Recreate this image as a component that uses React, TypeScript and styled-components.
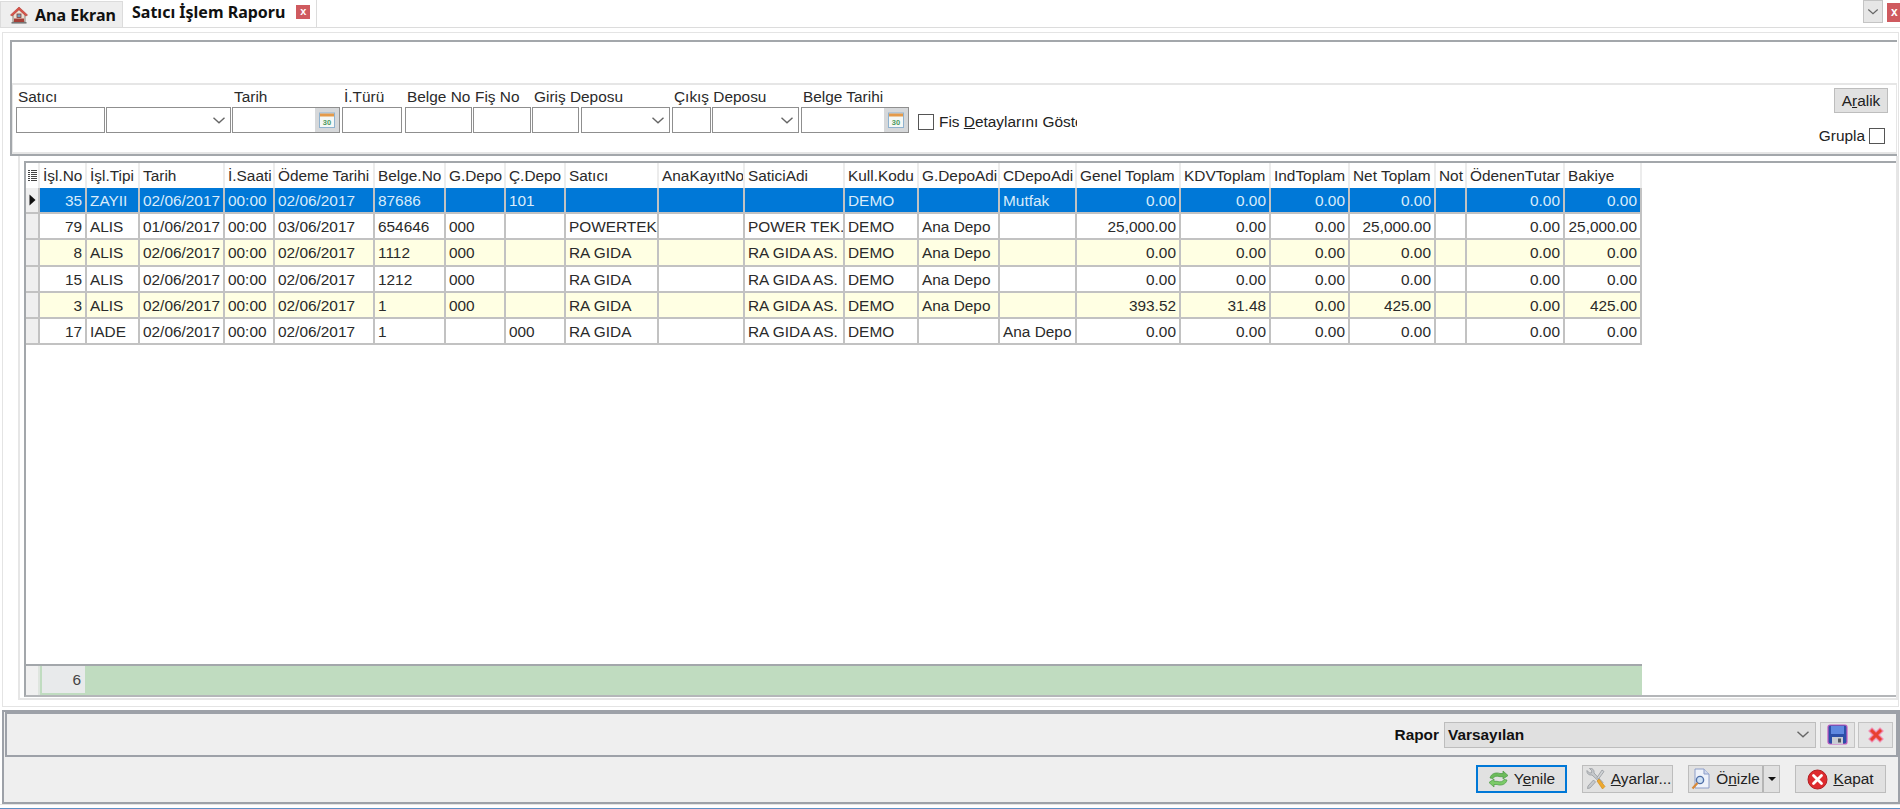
import React from 'react';
import styled, { createGlobalStyle } from 'styled-components';

const GlobalStyle = createGlobalStyle`
  html, body { margin: 0; padding: 0; background: #fff; }
  body { font-family: 'Liberation Sans', Arial, sans-serif; font-size: 15.4px; color: #222; }
  * { box-sizing: border-box; }
`;

const Page = styled.div`
  width: 1900px;
  height: 809px;
  display: flex;
  flex-direction: column;
  overflow: hidden;
`;

const TabBar = styled.div`
  height: 28px;
  flex-shrink: 0;
  display: flex;
  align-items: flex-end;
  border-bottom: 1px solid #dcdcdc;
`;

const Tab = styled.div<{ $active?: boolean }>`
  height: ${p => (p.$active ? 28 : 26)}px;
  width: ${p => (p.$active ? 194 : 123)}px;
  display: flex;
  align-items: center;
  gap: ${p => (p.$active ? 11 : 7)}px;
  padding-left: 9px;
  padding-bottom: ${p => (p.$active ? 3 : 0)}px;
  background: ${p => (p.$active ? '#fff' : '#eeeeee')};
  border: 1px solid #dcdcdc;
  border-top: ${p => (p.$active ? 'none' : '1px solid #dcdcdc')};
  border-bottom: none;
  border-left: ${p => (p.$active ? 'none' : '1px solid #dcdcdc')};
  font-family: 'Noto Sans', sans-serif;
  font-weight: 700;
  font-size: 16px;
  color: #111;
  white-space: nowrap;
`;

const TabClose = styled.span`
  width: 14px;
  height: 14px;
  background: #cf5a5f;
  color: #fff;
  font-size: 11px;
  line-height: 13px;
  font-weight: 700;
  text-align: center;
  font-family: 'Liberation Sans', sans-serif;
`;

const TabTools = styled.div`
  margin-left: auto;
  display: flex;
  align-items: flex-start;
  align-self: flex-start;
  gap: 4px;
`;

const ListButton = styled.div`
  width: 20px;
  height: 23px;
  background: #e6e6e6;
  border: 1px solid #c4c4c4;
  display: flex;
  align-items: center;
  justify-content: center;
`;

const WindowClose = styled.div`
  width: 13px;
  height: 19px;
  margin-top: 3px;
  background: #cf5a5f;
  color: #fff;
  font-size: 12px;
  font-weight: 700;
  line-height: 18px;
  padding-left: 4px;
  overflow: hidden;
`;

const Main = styled.div`
  flex: 1;
  min-height: 0;
  margin: 4px 1px 3px 2px;
  padding: 7px 0 6px 7px;
  display: flex;
  flex-direction: column;
  border: 1px solid #e4e4e4;
`;

const FilterBox = styled.div`
  height: 116px;
  flex-shrink: 0;
  margin-right: 1px;
  display: flex;
  flex-direction: column;
  border-top: 2px solid #a3a7ab;
  border-left: 2px solid #a3a7ab;
  border-bottom: 2px solid #a3a7ab;
`;

const BlankBand = styled.div`
  height: 41px;
  flex-shrink: 0;
`;

const FilterPanel = styled.div`
  flex: 1;
  display: flex;
  align-items: flex-start;
  padding: 3px 8px 0 3px;
  border: 1px solid #e6e6e6;
  border-width: 2px 1px 2px 1px;
`;

const Field = styled.div<{ $w: number; $pad: number }>`
  width: ${p => p.$w}px;
  padding-right: ${p => p.$pad}px;
  flex-shrink: 0;
`;

const FieldLabel = styled.div`
  height: 19px;
  line-height: 17px;
  padding-left: 2px;
  white-space: nowrap;
  color: #2a2a2a;
`;

const TextBox = styled.div`
  height: 26px;
  background: #fff;
  border: 1px solid #8f8f8f;
  display: flex;
  align-items: center;
  justify-content: flex-end;
`;

const CalendarButton = styled.div`
  width: 24px;
  height: 24px;
  background: #d6d8da;
  display: flex;
  align-items: center;
  justify-content: center;
`;

const CheckBox = styled.span`
  width: 16px;
  height: 16px;
  flex-shrink: 0;
  background: #fff;
  border: 1px solid #555;
`;

const DetailCheck = styled.div`
  margin: 25px 0 0 0;
  width: 159px;
  display: flex;
  align-items: center;
  gap: 5px;
  overflow: hidden;
  white-space: nowrap;
`;

const RightColumn = styled.div`
  margin-left: auto;
  display: flex;
  flex-direction: column;
  align-items: flex-end;
  gap: 14px;
`;

const SmallButton = styled.div`
  width: 54px;
  height: 25px;
  background: #e1e1e1;
  border: 1px solid #bdbdbd;
  text-align: center;
  line-height: 23px;
  color: #222;
`;

const GroupCheck = styled.div`
  display: flex;
  align-items: center;
  gap: 4px;
  padding-right: 3px;
`;

const GridSection = styled.div`
  flex: 1;
  min-height: 0;
  margin-left: 8px;
  padding: 5px 0 1px 4px;
  border-left: 2px solid #e6e6e6;
  border-bottom: 2px solid #e6e6e6;
  border-right: 2px solid #e6e6e6;
  display: flex;
`;

const Grid = styled.div`
  flex: 1;
  min-width: 0;
  display: flex;
  flex-direction: column;
  border-top: 2px solid #a3a7ab;
  border-left: 2px solid #a3a7ab;
  border-bottom: 2px solid #b4b6b9;
`;

const Row = styled.div<{ $tone?: 'head' | 'sel' | 'alt' | 'plain' }>`
  display: flex;
  flex-shrink: 0;
  width: 1616px;
  height: ${p => (p.$tone === 'head' ? 25 : 26.2)}px;
  background: ${p =>
    p.$tone === 'sel' ? '#0078d7' : p.$tone === 'alt' ? '#ffffe3' : '#fff'};
  color: ${p => (p.$tone === 'sel' ? '#d9ecfb' : '#2a2a2a')};
`;

const Cell = styled.div<{ $w: number; $right?: boolean; $head?: boolean }>`
  width: ${p => p.$w}px;
  flex-shrink: 0;
  padding: ${p => (p.$right && !p.$head ? '0 3px 0 0' : '0 0 0 3px')};
  line-height: 25px;
  text-align: ${p => (p.$right && !p.$head ? 'right' : 'left')};
  white-space: nowrap;
  overflow: hidden;
  border-right: ${p => (p.$head ? '2px solid #ececec' : '2px solid #c2c2c2')};
  border-bottom: ${p => (p.$head ? 'none' : '2px solid #c2c2c2')};
`;

const Indicator = styled.div<{ $head?: boolean }>`
  width: 14px;
  flex-shrink: 0;
  background: ${p => (p.$head ? '#fff' : '#efefef')};
  border-bottom: ${p => (p.$head ? 'none' : '2px solid #c2c2c2')};
  border-right: ${p => (p.$head ? '2px solid #ececec' : '2px solid #c2c2c2')};
  display: flex;
  align-items: center;
  justify-content: center;
`;

const GridBody = styled.div`
  flex: 1;
  min-height: 0;
  display: flex;
  flex-direction: column;
`;

const GridFooter = styled.div`
  width: 1616px;
  height: 31px;
  flex-shrink: 0;
  display: flex;
  background: #c0dcc0;
  border-top: 2px solid #a3a7ab;
`;

const FooterLead = styled.div`
  width: 14px;
  flex-shrink: 0;
  background: #f0f0f0;
  border-right: 2px solid #dfe5df;
`;

const FooterCount = styled.div`
  width: 43px;
  margin: 0 0 2px 2px;
  flex-shrink: 0;
  background: #e8eaeb;
  text-align: right;
  padding-right: 4px;
  line-height: 27px;
  color: #444;
`;

const BottomPanel = styled.div`
  height: 94px;
  flex-shrink: 0;
  margin-left: 2px;
  display: flex;
  flex-direction: column;
  background: #efefef;
  border: 2px solid #9da1a8;
`;

const ReportBar = styled.div`
  height: 45px;
  margin-left: 1px;
  flex-shrink: 0;
  display: flex;
  align-items: center;
  justify-content: flex-end;
  gap: 3px;
  padding-right: 3px;
  border: 2px solid #9da1a8;
`;

const ReportLabel = styled.span`
  font-weight: 700;
  margin-right: 2px;
  color: #111;
`;

const ReportCombo = styled.div`
  width: 372px;
  height: 26px;
  margin-right: 1px;
  background: #e0e0e0;
  border: 1px solid #bdbdbd;
  display: flex;
  align-items: center;
  justify-content: space-between;
  padding: 0 5px 0 3px;
  font-weight: 700;
  color: #111;
`;

const IconButton = styled.div`
  width: 35px;
  height: 26px;
  background: #e4e4e4;
  border: 1px solid #c4c4c4;
  display: flex;
  align-items: center;
  justify-content: center;
`;

const ActionBar = styled.div`
  flex: 1;
  display: flex;
  align-items: flex-start;
  justify-content: flex-end;
  gap: 15px;
  padding: 8px 12px 0 0;
`;

const ActionButton = styled.div<{ $focused?: boolean }>`
  width: 91px;
  height: 28px;
  background: #e1e1e1;
  border: ${p => (p.$focused ? '2px solid #0078d7' : '1px solid #bdbdbd')};
  display: flex;
  align-items: center;
  justify-content: center;
  gap: 5px;
  color: #222;
  white-space: nowrap;
`;

const SplitButton = styled.div`
  width: 92px;
  height: 28px;
  background: #e1e1e1;
  border: 1px solid #bdbdbd;
  display: flex;
  color: #222;
`;

const SplitMain = styled.div`
  flex: 1;
  display: flex;
  align-items: center;
  justify-content: center;
  gap: 5px;
  border-right: 2px solid #b5b5b5;
`;

const SplitArrow = styled.div`
  width: 15px;
  display: flex;
  align-items: center;
  justify-content: center;
`;

const Caret = styled.span`
  border-left: 4px solid transparent;
  border-right: 4px solid transparent;
  border-top: 4px solid #111;
`;

const BottomGap = styled.div`
  height: 4px;
  flex-shrink: 0;
  border-top: 1px solid #e4e4e4;
`;

const StatusLine = styled.div`
  height: 1px;
  flex-shrink: 0;
  background: #5f8fc4;
`;

const Chevron = ({ size = 14, color = '#666' }: { size?: number; color?: string }) => (
  <svg width={size} height={size * 0.6} viewBox="0 0 14 8" fill="none">
    <path d="M1.5 1.5 7 6.5l5.5-5" stroke={color} strokeWidth="1.4" />
  </svg>
);

const HomeIcon = () => (
  <svg width="18" height="20" viewBox="1 0 18 20">
    <path d="M4 9v8h12V9L10 4z" fill="#e9e1d6" stroke="#8d7f74" strokeWidth="1" />
    <path d="M1.5 10 10 2l8.500 8-1.600 1L10 4.800 3.100 11z" fill="#d9534a" stroke="#b03a33" strokeWidth=".6" />
    <rect x="8" y="9" width="4" height="3.500" fill="#6f9fbe" stroke="#8a3a30" strokeWidth=".8" />
    <rect x="5" y="13.500" width="10" height="3.500" fill="#a63f37" />
    <rect x="2.500" y="17" width="15" height="1.600" fill="#777" />
  </svg>
);

const CalendarIcon = () => (
  <svg width="18" height="18" viewBox="0 0 18 18">
    <rect x="1.500" y="2" width="15" height="14.500" fill="#f5f8f6" stroke="#8fb2cf" />
    <rect x="2" y="2.500" width="14" height="3" fill="#e49a4a" />
    <text x="9" y="13.500" fontSize="7.500" fontWeight="700" fill="#4c9a5e" textAnchor="middle" fontFamily="'Liberation Sans', sans-serif">30</text>
  </svg>
);

const RowMarker = () => (
  <svg width="7" height="12" viewBox="0 0 7 12">
    <path d="M0.500 0.500 6.500 6 0.500 11.500z" fill="#111" />
  </svg>
);

const HeaderMark = () => (
  <svg width="9" height="11" viewBox="0 0 9 11" fill="#444">
    <rect x="0" y="0" width="2" height="1" /><rect x="3" y="0" width="6" height="1" />
    <rect x="0" y="2" width="2" height="1" /><rect x="3" y="2" width="6" height="1" />
    <rect x="0" y="4" width="2" height="1" /><rect x="3" y="4" width="6" height="1" />
    <rect x="0" y="6" width="2" height="1" /><rect x="3" y="6" width="6" height="1" />
    <rect x="0" y="8" width="2" height="1" /><rect x="3" y="8" width="6" height="1" />
    <rect x="0" y="10" width="2" height="1" /><rect x="3" y="10" width="6" height="1" />
  </svg>
);

const SaveIcon = () => (
  <svg width="21" height="21" viewBox="0 0 21 21">
    <rect x="1" y="1" width="19" height="19" rx="2" fill="#2c4fa8" stroke="#c45ac0" strokeWidth="1.200" />
    <rect x="4" y="2" width="13" height="8" fill="#5f88e0" />
    <rect x="5" y="13" width="11" height="7" fill="#c9ccd4" />
    <rect x="11" y="14.500" width="3" height="4" fill="#55585f" />
  </svg>
);

const CrossIcon = () => (
  <svg width="18" height="18" viewBox="0 0 18 18">
    <path d="M2 5 5 2l4 4 4-4 3 3-4 4 4 4-3 3-4-4-4 4-3-3 4-4z" fill="#e8402f" stroke="#f08ab0" strokeWidth="1.200" />
  </svg>
);

const RefreshIcon = () => (
  <svg width="21" height="18" viewBox="0 0 21 18" fill="none">
    <path d="M2 8C3 3.500 8 2 12 3.500h3V1l5 4.500L15 9V6.700h-3C9 5.700 6 6 5 8.500z" fill="#6cbb5a" stroke="#4b9a45" strokeWidth=".7" />
    <path d="M19 10c-1 4.500-6 6-10 4.500H6V17l-5-4.500L6 9v2.300h3c3 1 6 .7 7-1.800z" fill="#7ccb68" stroke="#4b9a45" strokeWidth=".7" />
  </svg>
);

const ToolsIcon = () => (
  <svg width="22" height="22" viewBox="0 0 22 22">
    <path d="M3 2.500 5.500 5l2-.2.3-2-2.300-2.300C8.500 0 10.500 2 10 5l9 9.500-1.500 1.500L8 7C5 7.500 2.500 5.500 3 2.500z" fill="#c6c9cc" stroke="#8d9196" strokeWidth=".7" />
    <path d="M13 9.500 18 2l2 1.500-5.500 7.500z" fill="#d0d3d6" stroke="#8d9196" strokeWidth=".7" />
    <path d="M9.500 12 4 18l-.5 2.500L6 20l5.500-6z" fill="#c6c9cc" stroke="#8d9196" strokeWidth=".7" />
    <path d="M13 13l2-2 6 7.500-2.500 2.500z" fill="#efa92e" stroke="#c78718" strokeWidth=".6" />
  </svg>
);

const PreviewIcon = () => (
  <svg width="20" height="22" viewBox="0 0 20 22" fill="none">
    <path d="M4 1h9l5 5v14H4z" fill="#eef2fa" stroke="#8c9dc8" />
    <path d="M13 1v5h5" fill="#cfd9ee" stroke="#8c9dc8" />
    <circle cx="9" cy="12" r="3.600" fill="#cfe2f5" stroke="#4f6fa8" strokeWidth="1.400" />
    <path d="M6.500 15 1.500 20.500" stroke="#d88a3a" strokeWidth="2.200" />
  </svg>
);

const CloseIcon = () => (
  <svg width="21" height="21" viewBox="0 0 21 21">
    <circle cx="10.500" cy="10.500" r="9.500" fill="#de2b2f" stroke="#b01e22" />
    <path d="M6.500 6.500 14.500 14.500M14.500 6.500 6.500 14.500" stroke="#fff" strokeWidth="2.800" strokeLinecap="round" />
  </svg>
);

const columns: { title: string; w: number; right?: boolean }[] = [
  { title: 'İşl.No', w: 47, right: true },
  { title: 'İşl.Tipi', w: 53 },
  { title: 'Tarih', w: 85 },
  { title: 'İ.Saati', w: 50 },
  { title: 'Ödeme Tarihi', w: 100 },
  { title: 'Belge.No', w: 71 },
  { title: 'G.Depo', w: 60 },
  { title: 'Ç.Depo', w: 60 },
  { title: 'Satıcı', w: 93 },
  { title: 'AnaKayıtNo', w: 86 },
  { title: 'SaticiAdi', w: 100 },
  { title: 'Kull.Kodu', w: 74 },
  { title: 'G.DepoAdi', w: 81 },
  { title: 'CDepoAdi', w: 77 },
  { title: 'Genel Toplam', w: 104, right: true },
  { title: 'KDVToplam', w: 90, right: true },
  { title: 'IndToplam', w: 79, right: true },
  { title: 'Net Toplam', w: 86, right: true },
  { title: 'Not', w: 31 },
  { title: 'ÖdenenTutar', w: 98, right: true },
  { title: 'Bakiye', w: 77, right: true },
];

const rows: { tone: 'sel' | 'alt' | 'plain'; cells: string[] }[] = [
  { tone: 'sel', cells: ['35', 'ZAYII', '02/06/2017', '00:00', '02/06/2017', '87686', '', '101', '', '', '', 'DEMO', '', 'Mutfak', '0.00', '0.00', '0.00', '0.00', '', '0.00', '0.00'] },
  { tone: 'plain', cells: ['79', 'ALIS', '01/06/2017', '00:00', '03/06/2017', '654646', '000', '', 'POWERTEK', '', 'POWER TEK.', 'DEMO', 'Ana Depo', '', '25,000.00', '0.00', '0.00', '25,000.00', '', '0.00', '25,000.00'] },
  { tone: 'alt', cells: ['8', 'ALIS', '02/06/2017', '00:00', '02/06/2017', '1112', '000', '', 'RA GIDA', '', 'RA GIDA AS.', 'DEMO', 'Ana Depo', '', '0.00', '0.00', '0.00', '0.00', '', '0.00', '0.00'] },
  { tone: 'plain', cells: ['15', 'ALIS', '02/06/2017', '00:00', '02/06/2017', '1212', '000', '', 'RA GIDA', '', 'RA GIDA AS.', 'DEMO', 'Ana Depo', '', '0.00', '0.00', '0.00', '0.00', '', '0.00', '0.00'] },
  { tone: 'alt', cells: ['3', 'ALIS', '02/06/2017', '00:00', '02/06/2017', '1', '000', '', 'RA GIDA', '', 'RA GIDA AS.', 'DEMO', 'Ana Depo', '', '393.52', '31.48', '0.00', '425.00', '', '0.00', '425.00'] },
  { tone: 'plain', cells: ['17', 'IADE', '02/06/2017', '00:00', '02/06/2017', '1', '', '000', 'RA GIDA', '', 'RA GIDA AS.', 'DEMO', '', 'Ana Depo', '0.00', '0.00', '0.00', '0.00', '', '0.00', '0.00'] },
];

export default function App() {
  return (
    <Page>
      <GlobalStyle />
      <TabBar>
        <Tab>
          <HomeIcon />
          Ana Ekran
        </Tab>
        <Tab $active>
          Satıcı İşlem Raporu
          <TabClose>x</TabClose>
        </Tab>
        <TabTools>
          <ListButton>
            <Chevron size={12} />
          </ListButton>
          <WindowClose>x</WindowClose>
        </TabTools>
      </TabBar>

      <Main>
        <FilterBox>
          <BlankBand />
          <FilterPanel>
            <Field $w={90} $pad={1}>
              <FieldLabel>Satıcı</FieldLabel>
              <TextBox />
            </Field>
            <Field $w={126} $pad={1}>
              <FieldLabel>&nbsp;</FieldLabel>
              <TextBox>
                <Chevron />
                &nbsp;
              </TextBox>
            </Field>
            <Field $w={110} $pad={2}>
              <FieldLabel>Tarih</FieldLabel>
              <TextBox>
                <CalendarButton>
                  <CalendarIcon />
                </CalendarButton>
              </TextBox>
            </Field>
            <Field $w={63} $pad={3}>
              <FieldLabel>İ.Türü</FieldLabel>
              <TextBox />
            </Field>
            <Field $w={68} $pad={1}>
              <FieldLabel>Belge No</FieldLabel>
              <TextBox />
            </Field>
            <Field $w={59} $pad={1}>
              <FieldLabel>Fiş No</FieldLabel>
              <TextBox />
            </Field>
            <Field $w={49} $pad={2}>
              <FieldLabel>Giriş Deposu</FieldLabel>
              <TextBox />
            </Field>
            <Field $w={91} $pad={2}>
              <FieldLabel>&nbsp;</FieldLabel>
              <TextBox>
                <Chevron />
                &nbsp;
              </TextBox>
            </Field>
            <Field $w={40} $pad={1}>
              <FieldLabel>Çıkış Deposu</FieldLabel>
              <TextBox />
            </Field>
            <Field $w={89} $pad={2}>
              <FieldLabel>&nbsp;</FieldLabel>
              <TextBox>
                <Chevron />
                &nbsp;
              </TextBox>
            </Field>
            <Field $w={117} $pad={9}>
              <FieldLabel>Belge Tarihi</FieldLabel>
              <TextBox>
                <CalendarButton>
                  <CalendarIcon />
                </CalendarButton>
              </TextBox>
            </Field>
            <DetailCheck>
              <CheckBox />
              <span>
                Fis <u>D</u>etaylarını Göste
              </span>
            </DetailCheck>
            <RightColumn>
              <SmallButton>
                A<u>r</u>alik
              </SmallButton>
              <GroupCheck>
                Grupla
                <CheckBox />
              </GroupCheck>
            </RightColumn>
          </FilterPanel>
        </FilterBox>

        <GridSection>
          <Grid>
            <Row $tone="head">
              <Indicator $head>
                <HeaderMark />
              </Indicator>
              {columns.map(c => (
                <Cell key={c.title} $w={c.w} $head>
                  {c.title}
                </Cell>
              ))}
            </Row>
            <GridBody>
              {rows.map((r, i) => (
                <Row key={i} $tone={r.tone}>
                  <Indicator>{i === 0 && <RowMarker />}</Indicator>
                  {r.cells.map((v, j) => (
                    <Cell key={j} $w={columns[j].w} $right={columns[j].right}>
                      {v}
                    </Cell>
                  ))}
                </Row>
              ))}
            </GridBody>
            <GridFooter>
              <FooterLead />
              <FooterCount>6</FooterCount>
            </GridFooter>
          </Grid>
        </GridSection>
      </Main>

      <BottomPanel>
        <ReportBar>
          <ReportLabel>Rapor</ReportLabel>
          <ReportCombo>
            Varsayılan
            <Chevron />
          </ReportCombo>
          <IconButton>
            <SaveIcon />
          </IconButton>
          <IconButton>
            <CrossIcon />
          </IconButton>
        </ReportBar>
        <ActionBar>
          <ActionButton $focused>
            <RefreshIcon />
            <span>
              Y<u>e</u>nile
            </span>
          </ActionButton>
          <ActionButton>
            <ToolsIcon />
            <span>
              <u>A</u>yarlar...
            </span>
          </ActionButton>
          <SplitButton>
            <SplitMain>
              <PreviewIcon />
              <span>
                Ö<u>n</u>izle
              </span>
            </SplitMain>
            <SplitArrow>
              <Caret />
            </SplitArrow>
          </SplitButton>
          <ActionButton>
            <CloseIcon />
            <span>
              <u>K</u>apat
            </span>
          </ActionButton>
        </ActionBar>
      </BottomPanel>
      <BottomGap />
      <StatusLine />
    </Page>
  );
}
